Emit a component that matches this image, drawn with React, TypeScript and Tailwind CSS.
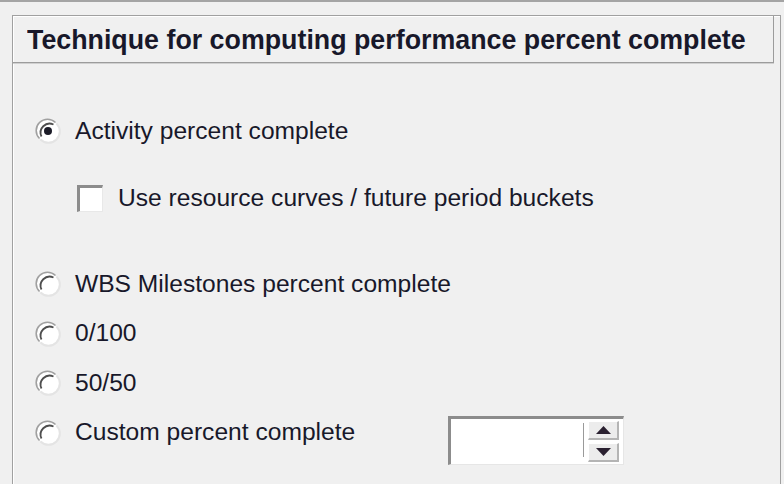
import React, { useState } from 'react';

const font = { fontFamily: '"Liberation Sans", Arial, sans-serif' };

function Radio({ checked }: { checked: boolean }) {
  return (
    <svg width="26" height="26" viewBox="0 0 26 26" className="shrink-0">
      <circle cx="13" cy="13" r="11" fill="#ffffff" />
      {/* lower-right light edge */}
      <path d="M 21.5 5.5 A 11 11 0 0 1 5.5 21.5" fill="none" stroke="#e4e4e4" strokeWidth="2" />
      {/* upper-left dark edges */}
      <path d="M 4.5 20.5 A 11 11 0 0 1 20.5 4.5" fill="none" stroke="#a0a0a0" strokeWidth="1.6" />
      <path d="M 6.5 18.5 A 9 9 0 0 1 18.5 6.5" fill="none" stroke="#4e4e4e" strokeWidth="1.8" />
      {checked && <circle cx="13" cy="13" r="4" fill="#1c1c28" />}
    </svg>
  );
}

function RadioRow({ label, checked, h, children }: { label: string; checked?: boolean; h: string; children?: React.ReactNode }) {
  return (
    <div className={`flex items-start pl-[22px] ${h}`}>
      <div className="flex items-center h-[50px] gap-[14px]">
        <Radio checked={!!checked} />
        <span className="w-[373px] text-[24.6px] leading-none whitespace-nowrap text-[#18182a]">{label}</span>
      </div>
      {children}
    </div>
  );
}

function Spinner() {
  const [val] = useState('');
  return (
    <div className="mt-[8px] w-[176px] h-[49px] bg-white border-t-[3px] border-l-[3px] border-t-[#8c8c8c] border-l-[#8c8c8c] border-r border-b border-r-[#e6e6e6] border-b-[#e6e6e6] flex items-start">
      <div className="flex-1 h-full pt-[4px] pl-[132px]">
        <div className="w-px h-[34px] bg-[#9a9a9a]">{val}</div>
      </div>
      <div className="flex flex-col gap-[3px] pt-[2px] pr-[4px]">
        <div className="w-[31px] h-[19px] bg-[#ececec] border-t border-l border-white border-r-2 border-b-2 border-r-[#b4b4b4] border-b-[#b4b4b4] flex items-center justify-center">
          <svg width="15" height="8" viewBox="0 0 15 8"><path d="M0 8 L7.5 0 L15 8 Z" fill="#2a2030" /></svg>
        </div>
        <div className="w-[31px] h-[19px] bg-[#ececec] border-t border-l border-white border-r-2 border-b-2 border-r-[#b4b4b4] border-b-[#b4b4b4] flex items-center justify-center">
          <svg width="15" height="8" viewBox="0 0 15 8"><path d="M0 0 L15 0 L7.5 8 Z" fill="#2a2030" /></svg>
        </div>
      </div>
    </div>
  );
}

export default function App() {
  return (
    <div className="w-[784px] h-[484px] bg-[#f0f0f0] border-t-2 border-[#a4a4a4] overflow-hidden" style={font}>
      <div className="ml-[12px] mt-[13px] w-[769px] h-[469px] border-l border-t border-r border-[#a0a0a0] shadow-[inset_1px_1px_0_#ffffff]">
        {/* group header */}
        <div className="w-[761px] h-[47px] border-r border-b border-[#9c9c9c] shadow-[inset_1px_1px_0_#ffffff,0_1px_0_#d0d0d0] flex items-center pl-[14px]">
          <span className="text-[26.8px] font-bold leading-none text-[#18182a] whitespace-nowrap origin-left scale-y-[1.06]">
            Technique for computing performance percent complete
          </span>
        </div>

        <div className="flex flex-col pt-[43px]">
          <RadioRow label="Activity percent complete" checked h="h-[50px]" />

          <div className="flex items-center h-[50px] mt-[17px] pl-[64px] gap-[15px]">
            <div className="w-[26px] h-[27px] bg-white border-t-[3px] border-l-[3px] border-t-[#8c8c8c] border-l-[#8c8c8c] border-r border-b border-r-[#e8e8e8] border-b-[#e8e8e8]" />
            <span className="text-[24.6px] leading-none whitespace-nowrap text-[#18182a]">Use resource curves / future period buckets</span>
          </div>

          <div className="mt-[36px]">
            <RadioRow label="WBS Milestones percent complete" h="h-[49.5px]" />
            <RadioRow label="0/100" h="h-[49.5px]" />
            <RadioRow label="50/50" h="h-[49.5px]" />
            <RadioRow label="Custom percent complete" h="h-[60px]">
              <Spinner />
            </RadioRow>
          </div>
        </div>
      </div>
    </div>
  );
}
